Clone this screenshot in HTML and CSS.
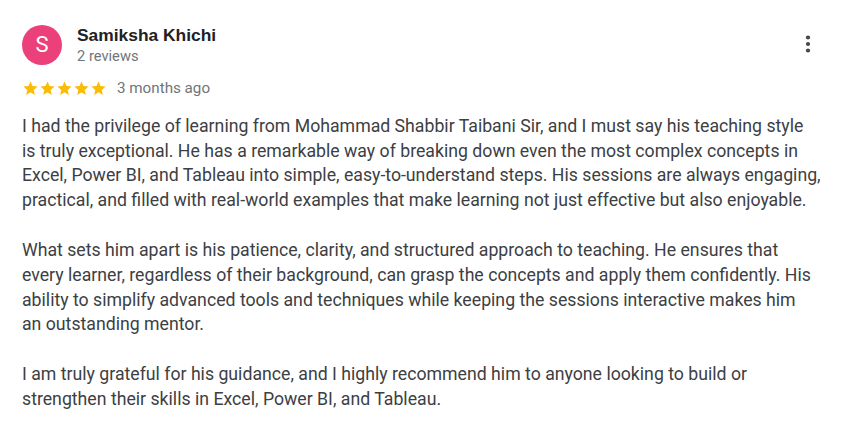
FILE: index.html
```html
<!DOCTYPE html>
<html>
<head>
<meta charset="utf-8">
<link rel="stylesheet" href="styles.css">
</head>
<body>
<div class="review">
  <div class="header">
    <div class="avatar">S</div>
    <div class="who">
      <div class="name">Samiksha Khichi</div>
      <div class="count">2 reviews</div>
    </div>
    <div class="more">
      <svg width="24" height="24" viewBox="0 0 24 24"><circle cx="12" cy="5.5" r="2.1" fill="#444746"/><circle cx="12" cy="12" r="2.1" fill="#444746"/><circle cx="12" cy="18.5" r="2.1" fill="#444746"/></svg>
    </div>
  </div>
  <div class="meta">
    <div class="stars">
      <svg class="star" viewBox="0 0 24 24"><path d="M12 17.27L18.18 21l-1.64-7.03L22 9.24l-7.19-.61L12 2 9.19 8.63 2 9.24l5.46 4.73L5.82 21z"/></svg>
      <svg class="star" viewBox="0 0 24 24"><path d="M12 17.27L18.18 21l-1.64-7.03L22 9.24l-7.19-.61L12 2 9.19 8.63 2 9.24l5.46 4.73L5.82 21z"/></svg>
      <svg class="star" viewBox="0 0 24 24"><path d="M12 17.27L18.18 21l-1.64-7.03L22 9.24l-7.19-.61L12 2 9.19 8.63 2 9.24l5.46 4.73L5.82 21z"/></svg>
      <svg class="star" viewBox="0 0 24 24"><path d="M12 17.27L18.18 21l-1.64-7.03L22 9.24l-7.19-.61L12 2 9.19 8.63 2 9.24l5.46 4.73L5.82 21z"/></svg>
      <svg class="star" viewBox="0 0 24 24"><path d="M12 17.27L18.18 21l-1.64-7.03L22 9.24l-7.19-.61L12 2 9.19 8.63 2 9.24l5.46 4.73L5.82 21z"/></svg>
    </div>
    <span class="date">3 months ago</span>
  </div>
  <div class="text">
    <p>I had the privilege of learning from Mohammad Shabbir Taibani Sir, and I must say his teaching style<br>is truly exceptional. He has a remarkable way of breaking down even the most complex concepts in<br>Excel, Power BI, and Tableau into simple, easy-to-understand steps. His sessions are always engaging,<br>practical, and filled with real-world examples that make learning not just effective but also enjoyable.</p>
    <p>What sets him apart is his patience, clarity, and structured approach to teaching. He ensures that<br>every learner, regardless of their background, can grasp the concepts and apply them confidently. His<br>ability to simplify advanced tools and techniques while keeping the sessions interactive makes him<br>an outstanding mentor.</p>
    <p>I am truly grateful for his guidance, and I highly recommend him to anyone looking to build or<br>strengthen their skills in Excel, Power BI, and Tableau.</p>
  </div>
</div>
</body>
</html>
```
FILE: styles.css
```css
html, body {
  margin: 0;
  padding: 0;
  background: #ffffff;
}
.review {
  padding: 25px 22px 0 22px;
  font-family: Roboto, "Noto Sans", sans-serif;
}
.header {
  display: flex;
  align-items: flex-start;
}
.avatar {
  width: 40px;
  height: 40px;
  border-radius: 50%;
  background: #ec407a;
  color: #ffffff;
  font-family: Roboto, sans-serif;
  font-size: 22px;
  line-height: 40px;
  text-align: center;
  flex: none;
}
.who {
  margin-left: 15px;
  flex: 1;
}
.name {
  font-family: "Liberation Sans", Arial, sans-serif;
  font-weight: bold;
  font-size: 17.4px;
  line-height: 20px;
  color: #202124;
  margin-top: 0;
}
.count {
  font-size: 14.7px;
  line-height: 20px;
  color: #70757a;
  margin-top: 1px;
}
.more {
  width: 24px;
  height: 24px;
  margin-top: 7px;
  margin-right: 10px;
}
.meta {
  display: flex;
  align-items: center;
  margin-top: 12px;
  height: 20px;
}
.stars {
  display: flex;
}
.star {
  width: 17px;
  height: 17px;
  fill: #fbbc04;
}
.date {
  margin-left: 10px;
  font-size: 15.2px;
  color: #70757a;
}
.text {
  margin-top: 15.7px;
  font-size: 17.7px;
  line-height: 24.85px;
  color: #3c4043;
  width: 812px;
}
.text p {
  margin: 0 0 24.85px 0;
}
```
